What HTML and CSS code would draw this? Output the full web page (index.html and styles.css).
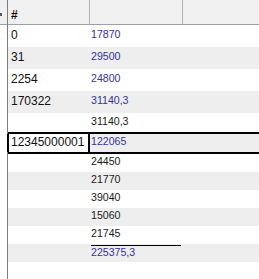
FILE: index.html
```html
<!DOCTYPE html>
<html>
<head>
<meta charset="utf-8">
<link rel="stylesheet" href="styles.css">
</head>
<body>
<div class="grid">
  <div class="stub">
    <div class="stub-head"><span class="mark"></span></div>
  </div>
  <div class="main">
    <div class="head">
      <div class="hc h1">#</div>
      <div class="hc h2"></div>
      <div class="hc h3"></div>
    </div>
    <div class="row tall"><div class="c1">0</div><div class="c2 blue">17870</div></div>
    <div class="row tall alt"><div class="c1">31</div><div class="c2 blue">29500</div></div>
    <div class="row tall"><div class="c1">2254</div><div class="c2 blue">24800</div></div>
    <div class="row tall alt"><div class="c1">170322</div><div class="c2 blue">31140,3</div></div>
    <div class="row blank"><div class="c1"></div><div class="c2">31140,3</div></div>
    <div class="row tall sel alt"><div class="c1 edit">12345000001</div><div class="c2 blue">122065</div></div>
    <div class="row short"><div class="c1"></div><div class="c2">24450</div></div>
    <div class="row short alt"><div class="c1"></div><div class="c2">21770</div></div>
    <div class="row short"><div class="c1"></div><div class="c2">39040</div></div>
    <div class="row short alt"><div class="c1"></div><div class="c2">15060</div></div>
    <div class="row short"><div class="c1"></div><div class="c2">21745</div></div>
    <div class="row short alt"><div class="c1"></div><div class="c2 total"><div class="sum blue">225375,3</div></div></div>
  </div>
</div>
</body>
</html>
```
FILE: styles.css
```css
html, body {
  margin: 0;
  padding: 0;
  background: #ffffff;
}
body {
  font-family: "Liberation Sans", Arial, sans-serif;
  color: #111111;
  overflow: hidden;
}
.grid {
  display: flex;
  width: 259px;
  height: 279px;
}
.stub {
  width: 7px;
  border-right: 1px solid #7c7c7c;
  flex: none;
}
.stub-head {
  height: 24px;
  background: #f0f0f0;
  border-bottom: 1px solid #a0a0a0;
  display: flex;
  align-items: flex-start;
  padding-top: 13px;
  box-sizing: border-box;
  height: 25px;
}
.mark {
  display: block;
  width: 2px;
  height: 3px;
  background: #555555;
}
.main {
  flex: 1;
  display: flex;
  flex-direction: column;
}
.head {
  display: flex;
  height: 24px;
  background: #f0f0f0;
  border-bottom: 1px solid #a0a0a0;
  flex: none;
}
.hc {
  display: flex;
  align-items: center;
  padding-top: 5px;
  box-sizing: border-box;
  font-weight: bold;
  font-size: 12px;
  line-height: 14px;
}
.h1 {
  width: 82px;
  border-right: 1px solid #b4b4b4;
  padding-left: 3px;
}
.h2 {
  width: 93px;
  border-right: 1px solid #b4b4b4;
}
.h3 {
  flex: 1;
}
.row {
  display: flex;
  flex: none;
  box-sizing: border-box;
}
.row.alt {
  background: #eeeeee;
}
.tall {
  height: 22px;
}
.blank {
  height: 19px;
}
.short {
  height: 18px;
}
.c1 {
  width: 82px;
  box-sizing: border-box;
  padding-left: 3px;
  padding-bottom: 2px;
  display: flex;
  align-items: center;
  font-size: 12px;
  line-height: 14px;
  color: #111111;
  flex: none;
}
.c2 {
  width: 92px;
  box-sizing: border-box;
  padding-left: 1px;
  padding-bottom: 4px;
  display: flex;
  align-items: center;
  font-size: 10.6px;
  line-height: 12px;
  color: #1a1a1a;
  flex: none;
}
.blue {
  color: #34349c;
}
.sel {
  border-top: 2px solid #000000;
  border-bottom: 2px solid #000000;
}
.sel .c1.edit {
  margin-left: -1px;
  width: 83px;
  background: #ffffff;
  border-left: 2px solid #000000;
  border-right: 2px solid #000000;
  padding-left: 2px;
  padding-bottom: 2px;
}
.sel .c2 {
  padding-bottom: 5px;
}
.c2.total {
  align-items: flex-start;
  padding: 1px 0 0 1px;
}
.sum {
  width: 90px;
  border-top: 1px solid #000000;
  line-height: 12px;
}
```
